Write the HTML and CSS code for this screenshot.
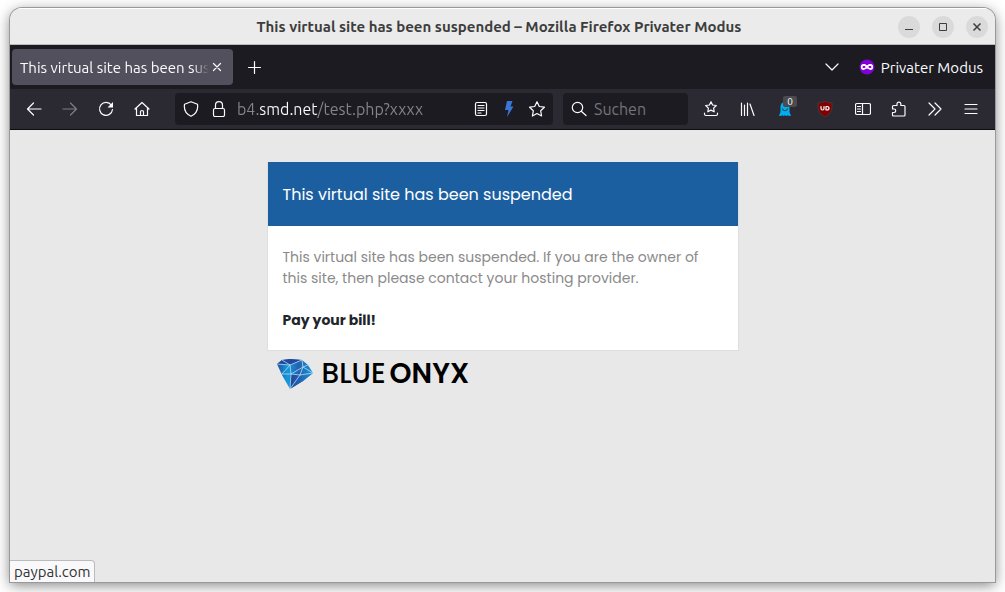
FILE: index.html
```html
<!DOCTYPE html>
<html lang="de">
<head>
    <meta charset="utf-8">
    <meta name="viewport" content="width=device-width, initial-scale=1">
    <title>This virtual site has been suspended</title>
    <link rel="stylesheet" href="styles.css">
</head>
<body>
    <div class="window">
        <header class="titlebar">
            <div class="window-title">This virtual site has been suspended – Mozilla Firefox Privater Modus</div>
            <div class="window-buttons">
                <button type="button" aria-label="Minimieren"><svg width="22" height="22" viewBox="0 0 22 22"><path d="M7 13.500h8"/></svg></button>
                <button type="button" aria-label="Maximieren"><svg width="22" height="22" viewBox="0 0 22 22"><path d="M7.500 7.500h7v7h-7z"/></svg></button>
                <button type="button" aria-label="Fenster schließen"><svg width="22" height="22" viewBox="0 0 22 22"><path class="cross" d="M7.500 7.500l7 7M14.500 7.500l-7 7"/></svg></button>
            </div>
        </header>

        <div class="tabbar">
            <div class="tab">
                <span class="tab-title">This virtual site has been suspended</span>
                <button type="button" class="tab-close" aria-label="Tab schließen"><svg width="16" height="16" viewBox="0 0 16 16"><path d="M4.500 4.500l7 7M11.500 4.500l-7 7"/></svg></button>
            </div>
            <button type="button" class="new-tab" aria-label="Neuer Tab"><svg width="16" height="16" viewBox="0 0 16 16"><path d="M7.500 2.500v12M1.500 8.500h12"/></svg></button>
            <button type="button" class="tab-list" aria-label="Alle Tabs"><svg width="16" height="16" viewBox="0 0 16 16"><path d="M2 5l6 6 6-6"/></svg></button>
            <div class="private">
                <svg width="16" height="16" viewBox="0 0 16 16">
                    <circle class="private-disc" cx="8" cy="8" r="7.500"/>
                    <path class="private-mask" d="M8 6.400C6.800 5.300 5.700 5 4.600 5 2.900 5 1.800 6.200 1.800 7.900s1.100 3 2.800 3c1.500 0 2.200-1.300 3.400-1.300s1.900 1.300 3.400 1.300c1.700 0 2.800-1.300 2.800-3S13.100 5 11.400 5C10.300 5 9.200 5.300 8 6.400zM5 6.900c.9 0 1.500.5 1.700 1C6.400 8.500 5.800 8.900 5 8.900S3.600 8.500 3.400 7.900c.2-.5.700-1 1.600-1zm6 0c.9 0 1.400.5 1.600 1-.2.600-.8 1-1.600 1s-1.400-.4-1.700-1c.2-.5.800-1 1.700-1z"/>
                </svg>
                <span>Privater Modus</span>
            </div>
        </div>

        <nav class="toolbar">
            <div class="nav-buttons">
                <button type="button" aria-label="Zurück"><svg width="16" height="16" viewBox="0 0 16 16"><path d="M15 8H1.500M7.500 2L1.500 8l6 6"/></svg></button>
                <button type="button" aria-label="Vor" disabled><svg width="16" height="16" viewBox="0 0 16 16"><path d="M1 8h13.500M8.500 2l6 6-6 6"/></svg></button>
                <button type="button" aria-label="Neu laden"><svg width="16" height="16" viewBox="0 0 16 16"><path d="M13.300 4A6.500 6.500 0 1 0 14.500 8.500"/><path class="solid" d="M15 1v5.500H9.500z"/></svg></button>
                <button type="button" aria-label="Startseite"><svg width="16" height="16" viewBox="0 0 16 16"><path d="M1 8l7-6.500L15 8M2.500 7v7.500h11V7M6.500 14.500v-4q0-1 1.500-1t1.500 1v4"/></svg></button>
            </div>

            <div class="urlbar">
                <svg width="16" height="16" viewBox="0 0 16 16"><path d="M8 .700l6.500 2.600c.7 4.700-.9 9.300-6.500 12C2.400 12.600.8 8 1.500 3.300z"/></svg>
                <svg width="16" height="16" viewBox="0 0 16 16"><rect x="2.500" y="7.500" width="11" height="8" rx="1.500"/><path d="M4.500 7.500V4.200a3.500 3.500 0 0 1 7 0v3.300"/></svg>
                <input type="text" class="url-input" aria-label="Adresse" value="b4.smd.net/test.php?xxxx">
                <button type="button" aria-label="Leseansicht"><svg width="16" height="16" viewBox="0 0 16 16"><rect x="2.500" y="1.500" width="11" height="13" rx="1.500"/><path d="M5 4.500h6M5 7h6M5 9.500h6M5 12h3"/></svg></button>
                <button type="button" aria-label="Blitz"><svg width="16" height="16" viewBox="0 0 16 16"><path class="bolt" d="M6 0h5.500L9.500 5.500H12.500L6 16l1.500-7H4z"/></svg></button>
                <button type="button" aria-label="Lesezeichen"><svg width="16" height="16" viewBox="0 0 16 16"><path d="M8 .700l2.300 4.800 5.100.7-3.700 3.600.9 5.200L8 12.500 3.400 15l.9-5.200L.600 6.200l5.100-.7z"/></svg></button>
            </div>

            <div class="searchbar">
                <svg width="16" height="16" viewBox="0 0 16 16"><circle cx="6.500" cy="6.500" r="5.200"/><path d="M10.300 10.300l4.700 4.200"/></svg>
                <input type="search" class="search-input" aria-label="Suchen" placeholder="Suchen">
            </div>

            <div class="nav-buttons">
                <button type="button" aria-label="Lesezeichen anzeigen"><svg width="16" height="16" viewBox="0 0 16 16"><path d="M8 .700l1.600 3.300 3.700.5-2.700 2.600.6 3.700L8 9.100l-3.200 1.700.6-3.700-2.700-2.600 3.700-.5zM1.500 12v1q0 1.500 1.500 1.500h10q1.500 0 1.500-1.500v-1"/></svg></button>
                <button type="button" aria-label="Bibliothek"><svg width="16" height="16" viewBox="0 0 16 16"><path d="M2.500 2v12.500M5.500 4v10.500M8.500 2v12.500M11 3l4 11.500"/></svg></button>
                <button type="button" class="extension" aria-label="Ghostery">
                    <svg width="16" height="16" viewBox="0 0 16 16"><path class="ghost" d="M8 1C5 1 3.500 3 3.500 6v5L2 14.700l2 .3 1.200-.8 1.600.8 1.200-.8 1.200.8 1.600-.8 1.200.8 2-.3-1.500-3.700V6c0-3-1.500-5-4.500-5z"/><path class="ghost-face" d="M5.500 8q2.500 3.500 5 0"/></svg>
                    <span class="count">0</span>
                </button>
                <button type="button" class="extension" aria-label="uBlock Origin"><svg width="16" height="16" viewBox="0 0 16 16"><path class="shield" d="M8 0c2.500 1.600 4.500 2 7 2 0 6.500.2 9.500-7 14C.800 11.500 1 8.500 1 2c2.500 0 4.500-.4 7-2z"/><path class="shield-mark" d="M4 5.500v2q0 1.500 1.500 1.500T7 7.500v-2M9 5.500V9h1q2 0 2-1.750T10 5.500z"/></svg></button>
                <button type="button" aria-label="Sidebar"><svg width="16" height="16" viewBox="0 0 16 16"><rect x=".5" y="2.500" width="15" height="11" rx="1.500"/><path d="M7.500 2.500v11M2.500 5.500h3M2.500 8h3M2.500 10.500h3"/></svg></button>
                <button type="button" aria-label="Erweiterungen"><svg width="16" height="16" viewBox="0 0 16 16"><path d="M1.500 8V5.500q0-1 1-1H6V3a1.900 1.900 0 0 1 3.800 0v1.500h3.200q1 0 1 1v8.500q0 1-1 1H2.500q-1 0-1-1v-2.500H3a1.750 1.750 0 0 0 0-3.500z"/></svg></button>
                <button type="button" aria-label="Weitere Werkzeuge"><svg width="16" height="16" viewBox="0 0 16 16"><path d="M2 2l6 6-6 6M8 2l6 6-6 6"/></svg></button>
                <button type="button" aria-label="Menü"><svg width="16" height="16" viewBox="0 0 16 16"><path d="M2 3.500h12M2 8h12M2 12.500h12"/></svg></button>
            </div>
        </nav>

        <main class="page">
            <div class="container">
                <section class="card">
                    <h1>This virtual site has been suspended</h1>
                    <div class="card-body">
                        <p>This virtual site has been suspended. If you are the owner of this site, then please contact your hosting provider.</p>
                        <a href="https://paypal.com">Pay your bill!</a>
                    </div>
                </section>
                <div class="logo">
                    <svg width="36" height="30" viewBox="0 0 36 30">
                        <defs>
                            <linearGradient id="gem" x1="0" y1="0" x2="1" y2="0">
                                <stop offset="0" stop-color="#2450a0"/>
                                <stop offset=".3" stop-color="#129bdc"/>
                                <stop offset=".6" stop-color="#2361b0"/>
                                <stop offset="1" stop-color="#1798d8"/>
                            </linearGradient>
                            <linearGradient id="gem-side" x1="0" y1="0" x2="1" y2="0">
                                <stop offset="0" stop-color="#22439a"/>
                                <stop offset="1" stop-color="#1a92d6"/>
                            </linearGradient>
                        </defs>
                        <path fill="url(#gem)" d="M0 5L5 1 13 0l12 1 6 5 5 8-10 8-13 8L5 16z"/>
                        <path fill="#23479a" d="M5 1l8-1 12 1-12 5L0 5z"/>
                        <path fill="url(#gem-side)" d="M14 15l12 1 10-2-10 8-13 8z"/>
                        <path class="facets" d="M0 5l13 1L25 1l1 7 5-2M5 1l8 5-8 9M13 6l1 9 12-7-3 8M5 15l9 0-1 15M14 15l9 1 13-2-10-6M23 16L13 30"/>
                    </svg>
                    <span class="logo-text">BLUE<b>ONYX</b></span>
                </div>
            </div>
            <div class="status">paypal.com</div>
        </main>
    </div>
</body>
</html>
```
FILE: styles.css
```css
* {
    box-sizing: border-box;
}

body {
    margin: 0;
    height: 100vh;
    padding: 8px 10px 10px;
    background: #fff;
    font-family: Ubuntu, "Noto Sans", sans-serif;
    font-size: 15px;
    overflow: hidden;
}

button {
    display: flex;
    align-items: center;
    justify-content: center;
    padding: 0;
    border: 0;
    background: none;
    color: inherit;
    font: inherit;
}

svg {
    display: block;
    flex: none;
    fill: none;
    stroke: currentColor;
    stroke-width: 1.2;
    stroke-linecap: round;
    stroke-linejoin: round;
}

.window {
    display: flex;
    flex-direction: column;
    height: 100%;
    border-radius: 12px 12px 0 0;
    background: #e8e8e8;
    box-shadow: 0 0 0 1px #999, 0 3px 14px rgba(0, 0, 0, .5);
    overflow: hidden;
}

/* window title */
.titlebar {
    display: grid;
    grid-template-columns: 1fr auto 1fr;
    align-items: center;
    height: 37px;
    padding-right: 7px;
    border-top: 1px solid #fff;
    border-bottom: 1px solid #bbb;
    background: #ebebeb;
    color: #3d3d3d;
}

.window-title {
    grid-column: 2;
    font-weight: bold;
}

.window-buttons {
    display: flex;
    justify-content: flex-end;
    gap: 12px;
}

.window-buttons button {
    width: 22px;
    height: 22px;
    border-radius: 50%;
    background: #dadada;
}

.window-buttons svg {
    stroke-width: 1;
    stroke-linecap: butt;
    stroke-linejoin: miter;
}

.window-buttons .cross {
    stroke-width: 1.5;
}

/* tabs */
.tabbar {
    display: flex;
    align-items: center;
    height: 44px;
    padding: 0 12px 0 2px;
    background: #1c1b22;
    color: #fbfbfe;
}

.tab {
    display: flex;
    align-items: center;
    width: 221px;
    height: 36px;
    padding: 0 8px;
    border-radius: 4px;
    background: #52505c;
}

.tab-title {
    flex: 1;
    overflow: hidden;
    white-space: nowrap;
    mask-image: linear-gradient(to left, transparent, #000 16px);
}

.new-tab {
    margin-left: 14px;
}

.tab-list {
    margin-left: auto;
}

.private {
    display: flex;
    align-items: center;
    gap: 6px;
    margin-left: 19px;
}

.private-disc {
    fill: #8000d7;
    stroke: none;
}

.private-mask {
    fill: #fff;
    stroke: none;
}

/* navigation */
.toolbar {
    display: flex;
    align-items: center;
    height: 41px;
    padding: 0 6px;
    border-bottom: 1px solid #0c0c0d;
    background: #2b2a33;
    color: #fbfbfe;
}

.nav-buttons {
    display: flex;
}

.nav-buttons button {
    width: 36px;
    height: 32px;
}

.nav-buttons button:disabled {
    opacity: .4;
}

.nav-buttons .extension {
    position: relative;
    width: 40px;
}

.solid {
    fill: currentColor;
    stroke: none;
}

.urlbar,
.searchbar {
    display: flex;
    align-items: center;
    height: 32px;
    padding: 0 8px;
    border-radius: 4px;
    background: #1c1b22;
}

.urlbar {
    flex: 1;
    gap: 12px;
    margin: 0 10px 0 15px;
}

.searchbar {
    gap: 7px;
    width: 125px;
    margin-right: 5px;
}

.url-input,
.search-input {
    flex: 1;
    min-width: 0;
    padding: 0;
    border: 0;
    outline: 0;
    background: none;
    color: #fbfbfe;
    font: inherit;
    font-size: 16px;
}

/* domain is lighter than the rest of the address */
.url-input {
    margin-left: -2px;
    background: linear-gradient(to right, #86858c 22px, #fbfbfe 22px, #fbfbfe 80px, #86858c 80px);
    background-clip: text;
    -webkit-background-clip: text;
    -webkit-text-fill-color: transparent;
}

.search-input::placeholder {
    color: #74737a;
}

.bolt {
    fill: #3a76d8;
    stroke: none;
}

.ghost {
    fill: #00aef0;
    stroke: none;
}

.ghost-face {
    stroke: #17465c;
}

.shield {
    fill: #800000;
    stroke: #5c4a50;
    stroke-width: .5;
}

.shield-mark {
    stroke: #fff;
}

.count {
    position: absolute;
    top: 3px;
    right: 8px;
    width: 14px;
    border-radius: 2px;
    background: #4a4a4f;
    color: #fff;
    font-size: 10px;
    line-height: 11px;
}

/* suspended page */
.page {
    position: relative;
    flex: 1;
    padding: 32px 16px;
    background: #e8e8e8;
    font-family: Poppins, Inter, sans-serif;
    font-size: 14px;
}

.container {
    max-width: 472px;
    margin: 0 auto;
}

.card {
    border: 1px solid #dedede;
    border-top: 0;
    background: #fff;
}

.card h1 {
    margin: 0;
    padding: 21px 15px 19px;
    background: #1c5fa1;
    color: #fff;
    font-size: 16px;
    font-weight: 400;
    line-height: 24px;
}

.card-body {
    padding: 21px 15px 19px;
    line-height: 21px;
}

.card-body p {
    margin: 0 0 21px;
    color: #8a8a8a;
}

.card-body a {
    color: #212529;
    font-weight: bold;
    text-decoration: none;
}

.logo {
    display: flex;
    align-items: center;
    gap: 9px;
    padding: 8px 10px;
}

.logo svg {
    stroke: none;
}

.logo .facets {
    stroke: #b9dcf3;
    stroke-width: .8;
}

.logo-text {
    color: #000;
    font-family: Poppins, Lato, sans-serif;
    font-size: 28px;
    font-weight: 500;
    line-height: 30px;
}

.logo-text b {
    margin-left: 4px;
    font-weight: 600;
}

.status {
    position: absolute;
    left: 0;
    bottom: 0;
    padding: 0 4px;
    border: 1px solid #bbb;
    border-width: 1px 1px 0 0;
    border-top-right-radius: 4px;
    background: #f9f9fb;
    color: #333;
    font-family: Ubuntu, "Noto Sans", sans-serif;
    font-size: 15px;
    line-height: 21px;
}
```
